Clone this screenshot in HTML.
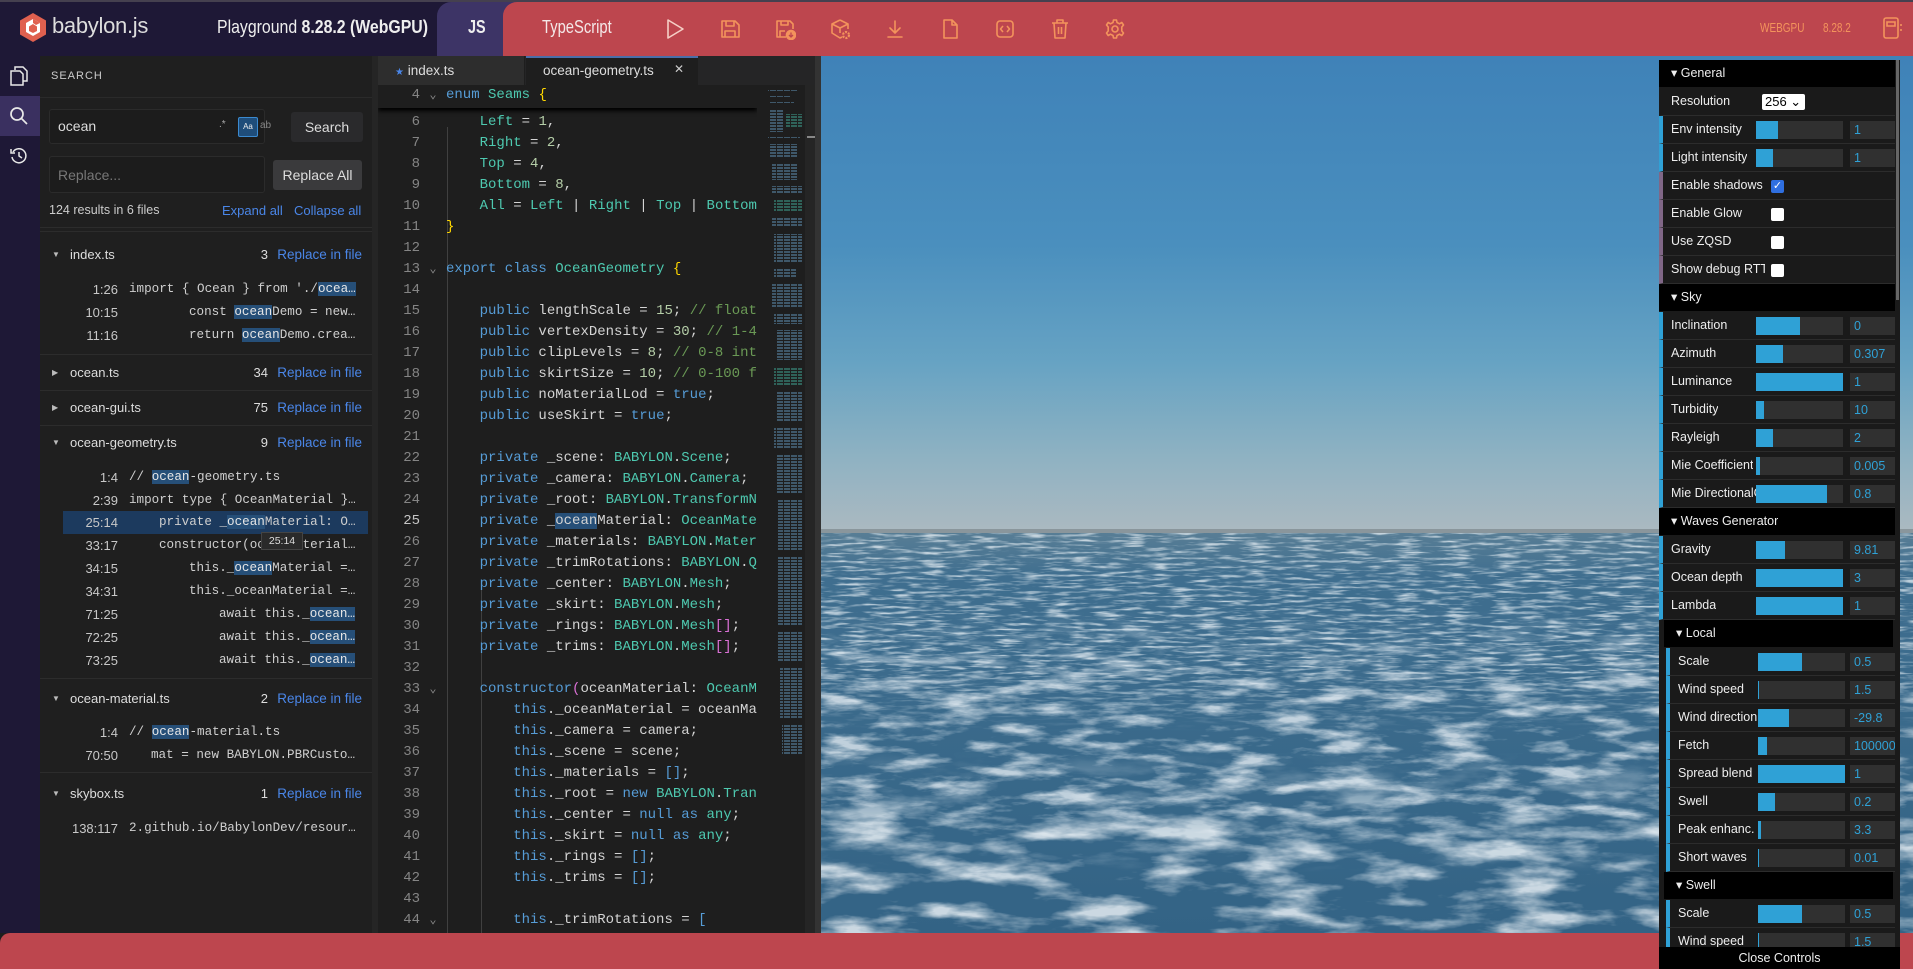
<!DOCTYPE html>
<html><head><meta charset="utf-8"><style>
*{margin:0;padding:0;box-sizing:border-box}
body{width:1913px;height:969px;overflow:hidden;background:#1e1e1e;font-family:"Liberation Sans",sans-serif;position:relative}
.a{position:absolute}
.hdr{left:0;top:0;width:1913px;height:56px;background:#1e1836;border-top:2px solid #45404f}
.ic{position:absolute;top:18px;width:22px;height:22px}
.sr{position:absolute;left:0;width:372px;height:23px;font-size:12.6px;color:#cfcfcf;white-space:pre;line-height:23px}
.sr .ln{position:absolute;right:254px;font-family:"Liberation Sans",sans-serif;font-size:13px;color:#c8c8c8}
.sr .tx{position:absolute;font-family:"Liberation Mono",monospace;overflow:hidden;right:14px}
.h{background:#264f78;color:#e6e6e6}
.fr{position:absolute;left:40px;width:332px;height:30px;font-size:13px;color:#ddd;line-height:30px}
.fr .ar{position:absolute;left:12px;font-size:8px;color:#bbb}
.fr .nm{position:absolute;left:30px}
.fr .ct{position:absolute;right:104px}
.fr .rp{position:absolute;right:10px;color:#4a86e8;font-size:13.5px}
.sep{position:absolute;left:40px;width:332px;height:1px;background:#2c2c2c}
.code{left:378px;top:85px;width:379px;height:848px;overflow:hidden}
.cl{position:absolute;left:0;height:21px;line-height:21px;font-family:"Liberation Mono",monospace;font-size:14px;color:#d4d4d4;white-space:pre;width:379px}
.cl .g{display:inline-block;width:42px;text-align:right;color:#858585}
.cl .f{display:inline-block;width:26px;color:#888;font-size:12px;text-align:center}
.k{color:#569cd6}.t{color:#4ec9b0}.n{color:#b5cea8}.c{color:#6a9955}.y{color:#ffd700}.p{color:#da70d6}
.gui{left:1659px;top:60px;width:241px;height:887px;overflow:hidden;background:#1a1a1a;font-size:12.5px;color:#eee}
.row{position:absolute;left:0;width:236px;height:28px;border-bottom:1px solid #2c2c2c;background:#1a1a1a;line-height:27px}
.row .lb{position:absolute;left:8px;white-space:nowrap;overflow:hidden}
.row.num{border-left:4px solid #2fa1d6}
.row.bool{border-left:4px solid #806787}
.row.hd{background:#000;border-left:none;border-bottom:1px solid #1a1a1a}
.row.hd .lb{left:12px}
.sl{position:absolute;left:93px;top:5px;width:87px;height:18px;background:#303030}
.sl i{position:absolute;left:0;top:0;height:18px;background:#2fa1d6}
.nb{position:absolute;left:187px;top:5px;width:45px;height:18px;background:#303030;color:#2fa1d6;line-height:18px;padding-left:4px;font-size:12.5px;overflow:hidden;white-space:nowrap}
.cb{position:absolute;left:108px;top:8px;width:13px;height:13px;background:#fff;border-radius:2px}
.loc .row{left:7px;width:229px}
</style></head><body>

<div class="a hdr"></div>
<svg class="a" style="left:19px;top:12px" width="28" height="31" viewBox="0 0 28 31"><path d="M14 1 L27 8.5 V22.5 L14 30 L1 22.5 V8.5Z" fill="#e0604f"/><path d="M14 7 L21 11 V20 L14 24 L7 20 V11Z" fill="#fff"/><path d="M14 12 L18 14.5 V19 L14 21 L10 19 V14.5Z" fill="#e0604f"/><path d="M14 7 L21 11 L17 13 L14 11Z" fill="#e0604f"/></svg>
<div class="a" style="left:52px;top:13px;font-size:22px;color:#ddd;letter-spacing:-0.3px">babylon.js</div>
<div class="a" style="left:217px;top:17px;font-size:18px;color:#eee;transform:scaleX(.88);transform-origin:left;white-space:nowrap">Playground <b>8.28.2 (WebGPU)</b></div>
<div class="a" style="left:437px;top:2px;width:80px;height:54px;background:#3d3466;border-radius:14px 0 0 0"></div>
<div class="a" style="left:468px;top:17px;font-size:18px;color:#eee;transform:scaleX(.8);transform-origin:left;font-weight:bold">JS</div>
<div class="a" style="left:503px;top:2px;width:1410px;height:54px;background:#bd464e;border-radius:14px 0 0 0"></div>
<div class="a" style="left:542px;top:17px;font-size:18px;color:#f4e8e8;transform:scaleX(.82);transform-origin:left">TypeScript</div>
<svg class="ic" style="left:664px" viewBox="0 0 22 22" fill="none" stroke="#f6cfc6" stroke-width="1.6" stroke-linejoin="round"><path d="M4 2 L19 11 L4 20Z"/></svg>
<svg class="ic" style="left:719px" viewBox="0 0 22 22" fill="none" stroke="#f3935c" stroke-width="1.6" stroke-linejoin="round"><path d="M3 3 H16 L20 7 V19 H3Z"/><path d="M7 3 V8 H15 V3"/><path d="M6 19 V13 H16 V19"/></svg>
<svg class="ic" style="left:774px" viewBox="0 0 22 22" fill="none" stroke="#f3935c" stroke-width="1.6" stroke-linejoin="round"><path d="M12 19 H3 V3 H16 L19 6 V11"/><path d="M7 3 V7 H14 V3"/><path d="M6 19 V13 H11"/><circle cx="17" cy="17" r="4.5" fill="#f3935c"/><path d="M17 14.5 V19 M15 17 L17 19 L19 17" stroke="#bd464e" stroke-width="1.3"/></svg>
<svg class="ic" style="left:829px" viewBox="0 0 22 22" fill="none" stroke="#f3935c" stroke-width="1.6" stroke-linejoin="round"><path d="M11 2 L19 6 V11 M11 2 L3 6 V15 L11 20 L13 19"/><path d="M3 6 L11 10 L19 6 M11 10 V15"/><circle cx="17" cy="17" r="3" stroke-dasharray="2 1.2" stroke-width="2.2"/></svg>
<svg class="ic" style="left:884px" viewBox="0 0 22 22" fill="none" stroke="#f3935c" stroke-width="1.6" stroke-linecap="round"><path d="M11 3 V15 M6 10 L11 15 L16 10 M4 19 H18"/></svg>
<svg class="ic" style="left:939px" viewBox="0 0 22 22" fill="none" stroke="#f3935c" stroke-width="1.6" stroke-linejoin="round"><path d="M5 2 H13 L18 7 V20 H5Z M13 2 V7 H18"/></svg>
<svg class="ic" style="left:994px" viewBox="0 0 22 22" fill="none" stroke="#f3935c" stroke-width="1.6" stroke-linejoin="round"><rect x="3" y="3" width="16" height="16" rx="3"/><path d="M9 8 L6.5 11 L9 14 M13 8 L15.5 11 L13 14"/></svg>
<svg class="ic" style="left:1049px" viewBox="0 0 22 22" fill="none" stroke="#f3935c" stroke-width="1.6" stroke-linejoin="round"><path d="M3 5 H19 M8 5 V2 H14 V5 M5 5 L6 20 H16 L17 5 M9.5 9 V16 M12.5 9 V16"/></svg>
<svg class="ic" style="left:1104px" viewBox="0 0 22 22" fill="none" stroke="#f3935c" stroke-width="1.6" stroke-linejoin="round"><circle cx="11" cy="11" r="3"/><path d="M9.5 2 H12.5 L13 4.5 L15.5 5.8 L17.8 4.5 L19.5 7 L17.8 9 V13 L19.5 15 L17.8 17.5 L15.5 16.2 L13 17.5 L12.5 20 H9.5 L9 17.5 L6.5 16.2 L4.2 17.5 L2.5 15 L4.2 13 V9 L2.5 7 L4.2 4.5 L6.5 5.8 L9 4.5Z"/></svg>
<div class="a" style="left:1760px;top:21px;font-size:12.5px;color:#f3935c;transform:scaleX(.8);transform-origin:left">WEBGPU</div>
<div class="a" style="left:1823px;top:21px;font-size:12.5px;color:#f3935c;transform:scaleX(.8);transform-origin:left">8.28.2</div>
<svg class="a" style="left:1881px;top:16px" width="22" height="24" viewBox="0 0 22 24" fill="none" stroke="#f3935c" stroke-width="1.6"><rect x="3" y="2" width="14" height="20" rx="2"/><path d="M6 6 H14 V10 H6Z"/><path d="M20 8 V10 M20 13 V15"/></svg>

<div class="a" style="left:0;top:56px;width:40px;height:877px;background:#1e1836"></div>
<div class="a" style="left:0;top:96px;width:40px;height:40px;background:#3a3060"></div>
<svg class="a" style="left:8px;top:65px" width="22" height="22" viewBox="0 0 22 22" fill="none" stroke="#e8e8e8" stroke-width="1.5"><path d="M7 5 V2 H15 L19 6 V16 H15"/><path d="M3 6 H12 L15 9 V20 H3Z"/></svg>
<svg class="a" style="left:8px;top:105px" width="22" height="22" viewBox="0 0 22 22" fill="none" stroke="#e8e8e8" stroke-width="1.7"><circle cx="9" cy="9" r="6"/><path d="M13.5 13.5 L19 19"/></svg>
<svg class="a" style="left:9px;top:146px" width="20" height="20" viewBox="0 0 20 20" fill="none" stroke="#e8e8e8" stroke-width="1.5"><path d="M4 6 A7 7 0 1 1 3 11"/><path d="M2 3 V7 H6"/><path d="M10 6 V10 L13 12"/></svg>

<div class="a" style="left:40px;top:56px;width:332px;height:877px;background:#1f1f1f"></div>
<div class="a" style="left:372px;top:56px;width:6px;height:877px;background:#252525"></div>
<div class="a" style="left:51px;top:70px;font-size:11px;color:#ccc;letter-spacing:1px">SEARCH</div>
<div class="a" style="left:40px;top:97px;width:332px;height:1px;background:#2a2a2a"></div>
<div class="a" style="left:49px;top:109px;width:216px;height:35px;background:#1c1c1c;border:1px solid #2b2b2b;border-radius:3px"></div>
<div class="a" style="left:58px;top:118px;font-size:14px;color:#ddd">ocean</div>
<div class="a" style="left:219px;top:119px;font-size:10px;color:#aaa">.*</div>
<div class="a" style="left:238px;top:117px;width:20px;height:20px;background:#1f4d7a;border:1px solid #3b8ad0;border-radius:2px;font-size:8px;color:#eee;text-align:center;line-height:18px">Aa</div>
<div class="a" style="left:260px;top:120px;font-size:10px;color:#888">ab</div>
<div class="a" style="left:291px;top:112px;width:72px;height:30px;background:#2a2a2c;border-radius:3px;font-size:14px;color:#ddd;text-align:center;line-height:30px">Search</div>
<div class="a" style="left:49px;top:156px;width:216px;height:37px;background:#1c1c1c;border:1px solid #2b2b2b;border-radius:3px"></div>
<div class="a" style="left:58px;top:167px;font-size:14px;color:#777">Replace...</div>
<div class="a" style="left:273px;top:160px;width:89px;height:30px;background:#3a3a3c;border-radius:3px;font-size:14px;color:#ddd;text-align:center;line-height:30px">Replace All</div>
<div class="a" style="left:49px;top:203px;font-size:12.5px;color:#ccc">124 results in 6 files</div>
<div class="a" style="left:222px;top:203px;font-size:13px;color:#4a86e8">Expand all</div>
<div class="a" style="left:294px;top:203px;font-size:13px;color:#4a86e8">Collapse all</div>
<div class="sep" style="top:227px"></div>
<div class="sep" style="top:231px"></div>

<div class="fr" style="top:240px"><span class="ar">▼</span><span class="nm">index.ts</span><span class="ct">3</span><span class="rp">Replace in file</span></div>
<div class="sr" style="top:278px"><span class="ln">1:26</span><span class="tx" style="left:129px">import { Ocean } from './<span class="h">ocea…</span></span></div>
<div class="sr" style="top:301px"><span class="ln">10:15</span><span class="tx" style="left:189px">const <span class="h">ocean</span>Demo = new…</span></div>
<div class="sr" style="top:324px"><span class="ln">11:16</span><span class="tx" style="left:189px">return <span class="h">ocean</span>Demo.crea…</span></div>
<div class="sep" style="top:354px"></div>
<div class="fr" style="top:358px"><span class="ar">▶</span><span class="nm">ocean.ts</span><span class="ct">34</span><span class="rp">Replace in file</span></div>
<div class="sep" style="top:390px"></div>
<div class="fr" style="top:393px"><span class="ar">▶</span><span class="nm">ocean-gui.ts</span><span class="ct">75</span><span class="rp">Replace in file</span></div>
<div class="sep" style="top:425px"></div>
<div class="fr" style="top:428px"><span class="ar">▼</span><span class="nm">ocean-geometry.ts</span><span class="ct">9</span><span class="rp">Replace in file</span></div>
<div class="sr" style="top:466px"><span class="ln">1:4</span><span class="tx" style="left:129px">// <span class="h">ocean</span>-geometry.ts</span></div>
<div class="sr" style="top:489px"><span class="ln">2:39</span><span class="tx" style="left:129px">import type { OceanMaterial }…</span></div>
<div class="a" style="left:63px;top:511px;width:305px;height:23px;background:#1c3a5e"></div>
<div class="sr" style="top:511px"><span class="ln">25:14</span><span class="tx" style="left:159px">private _<span class="h">ocean</span>Material: O…</span></div>
<div class="sr" style="top:534px"><span class="ln">33:17</span><span class="tx" style="left:159px">constructor(oc     terial…</span></div>
<div class="a" style="left:261px;top:532px;width:42px;height:18px;background:#2a2a2a;border:1px solid #444;font-size:10.5px;color:#ddd;text-align:center;line-height:16px">25:14</div>
<div class="sr" style="top:557px"><span class="ln">34:15</span><span class="tx" style="left:189px">this._<span class="h">ocean</span>Material =…</span></div>
<div class="sr" style="top:580px"><span class="ln">34:31</span><span class="tx" style="left:189px">this._oceanMaterial =…</span></div>
<div class="sr" style="top:603px"><span class="ln">71:25</span><span class="tx" style="left:219px">await this._<span class="h">ocean…</span></span></div>
<div class="sr" style="top:626px"><span class="ln">72:25</span><span class="tx" style="left:219px">await this._<span class="h">ocean…</span></span></div>
<div class="sr" style="top:649px"><span class="ln">73:25</span><span class="tx" style="left:219px">await this._<span class="h">ocean…</span></span></div>
<div class="sep" style="top:678px"></div>
<div class="fr" style="top:684px"><span class="ar">▼</span><span class="nm">ocean-material.ts</span><span class="ct">2</span><span class="rp">Replace in file</span></div>
<div class="sr" style="top:721px"><span class="ln">1:4</span><span class="tx" style="left:129px">// <span class="h">ocean</span>-material.ts</span></div>
<div class="sr" style="top:744px"><span class="ln">70:50</span><span class="tx" style="left:151px">mat = new BABYLON.PBRCusto…</span></div>
<div class="sep" style="top:772px"></div>
<div class="fr" style="top:779px"><span class="ar">▼</span><span class="nm">skybox.ts</span><span class="ct">1</span><span class="rp">Replace in file</span></div>
<div class="sr" style="top:817px"><span class="ln">138:117</span><span class="tx" style="left:129px">2.github.io/BabylonDev/resour…</span></div>

<div class="a" style="left:378px;top:56px;width:437px;height:29px;background:#252526"></div>
<div class="a" style="left:378px;top:56px;width:147px;height:29px;background:#2d2d2d;border-right:1px solid #1e1e1e"></div>
<div class="a" style="left:395px;top:63px;font-size:13.5px;color:#ddd"><span style="color:#4a86e8;font-size:10px">★</span> index.ts</div>
<div class="a" style="left:526px;top:56px;width:172px;height:29px;background:#1e1e1e;border-top:2px solid #4a6ea8"></div>
<div class="a" style="left:543px;top:63px;font-size:13.5px;color:#ddd">ocean-geometry.ts</div>
<div class="a" style="left:674px;top:62px;font-size:12px;color:#ccc">✕</div>
<div class="a" style="left:757px;top:85px;width:58px;height:848px;background:#1e1e1e"></div>
<svg class="a" style="left:766px;top:88px" width="40" height="800">
<g fill="#5a88a8" opacity=".55">
<rect x="2" y="2" width="30" height="2"/><rect x="4" y="8" width="20" height="2"/><rect x="4" y="14" width="24" height="2"/><rect x="4" y="22" width="14" height="22"/><rect x="20" y="26" width="16" height="14" fill="#3e9a8a"/><rect x="2" y="48" width="32" height="2"/><rect x="4" y="56" width="28" height="14"/><rect x="6" y="76" width="26" height="16"/><rect x="6" y="98" width="30" height="8"/><rect x="8" y="112" width="28" height="12" fill="#3e9a8a"/><rect x="6" y="130" width="30" height="8"/><rect x="8" y="146" width="28" height="28"/><rect x="8" y="180" width="22" height="10"/><rect x="6" y="196" width="30" height="24"/><rect x="8" y="226" width="28" height="10"/><rect x="10" y="242" width="26" height="30"/><rect x="8" y="280" width="28" height="18" fill="#3e9a8a"/><rect x="10" y="304" width="26" height="30"/><rect x="8" y="340" width="28" height="20"/><rect x="10" y="366" width="26" height="40"/><rect x="12" y="412" width="24" height="50"/><rect x="12" y="468" width="24" height="70"/><rect x="12" y="544" width="24" height="30"/><rect x="14" y="580" width="22" height="50"/><rect x="16" y="636" width="20" height="30"/></g></svg>
<div class="a" style="left:766px;top:88px;width:40px;height:800px;background:repeating-linear-gradient(#1e1e1e 0 1px,transparent 1px 3px),repeating-linear-gradient(90deg,transparent 0 3px,#1e1e1e 3px 4px,transparent 4px 7px)"></div>
<div class="a" style="left:805px;top:85px;width:10px;height:848px;background:#252525"></div>
<div class="a" style="left:807px;top:136px;width:8px;height:2px;background:#888"></div>
<div class="a" style="left:815px;top:56px;width:6px;height:877px;background:#333"></div>

<div class="a code">
<div class="a" style="left:69px;top:42px;width:1px;height:806px;background:#404040"></div>
<div class="a" style="left:103px;top:504px;width:1px;height:344px;background:#404040"></div>
<div class="cl" style="top:27px"><span class="g">6</span><span class="f"></span>    <span class="t">Left</span> = <span class="n">1</span>,</div>
<div class="cl" style="top:48px"><span class="g">7</span><span class="f"></span>    <span class="t">Right</span> = <span class="n">2</span>,</div>
<div class="cl" style="top:69px"><span class="g">8</span><span class="f"></span>    <span class="t">Top</span> = <span class="n">4</span>,</div>
<div class="cl" style="top:90px"><span class="g">9</span><span class="f"></span>    <span class="t">Bottom</span> = <span class="n">8</span>,</div>
<div class="cl" style="top:111px"><span class="g">10</span><span class="f"></span>    <span class="t">All</span> = <span class="t">Left</span> | <span class="t">Right</span> | <span class="t">Top</span> | <span class="t">Bottom</span></div>
<div class="cl" style="top:132px"><span class="g">11</span><span class="f"></span><span class="y">}</span></div>
<div class="cl" style="top:153px"><span class="g">12</span><span class="f"></span></div>
<div class="cl" style="top:174px"><span class="g">13</span><span class="f">⌄</span><span class="k">export class</span> <span class="t">OceanGeometry</span> <span class="y">{</span></div>
<div class="cl" style="top:195px"><span class="g">14</span><span class="f"></span></div>
<div class="cl" style="top:216px"><span class="g">15</span><span class="f"></span>    <span class="k">public</span> lengthScale = <span class="n">15</span>; <span class="c">// float</span></div>
<div class="cl" style="top:237px"><span class="g">16</span><span class="f"></span>    <span class="k">public</span> vertexDensity = <span class="n">30</span>; <span class="c">// 1-4</span></div>
<div class="cl" style="top:258px"><span class="g">17</span><span class="f"></span>    <span class="k">public</span> clipLevels = <span class="n">8</span>; <span class="c">// 0-8 int</span></div>
<div class="cl" style="top:279px"><span class="g">18</span><span class="f"></span>    <span class="k">public</span> skirtSize = <span class="n">10</span>; <span class="c">// 0-100 f</span></div>
<div class="cl" style="top:300px"><span class="g">19</span><span class="f"></span>    <span class="k">public</span> noMaterialLod = <span class="k">true</span>;</div>
<div class="cl" style="top:321px"><span class="g">20</span><span class="f"></span>    <span class="k">public</span> useSkirt = <span class="k">true</span>;</div>
<div class="cl" style="top:342px"><span class="g">21</span><span class="f"></span></div>
<div class="cl" style="top:363px"><span class="g">22</span><span class="f"></span>    <span class="k">private</span> _scene: <span class="t">BABYLON</span>.<span class="t">Scene</span>;</div>
<div class="cl" style="top:384px"><span class="g">23</span><span class="f"></span>    <span class="k">private</span> _camera: <span class="t">BABYLON</span>.<span class="t">Camera</span>;</div>
<div class="cl" style="top:405px"><span class="g">24</span><span class="f"></span>    <span class="k">private</span> _root: <span class="t">BABYLON</span>.<span class="t">TransformNode</span></div>
<div class="cl" style="top:426px"><span class="g" style="color:#c6c6c6">25</span><span class="f"></span>    <span class="k">private</span> _<span style="background:#264f78">ocean</span>Material: <span class="t">OceanMaterial</span></div>
<div class="cl" style="top:447px"><span class="g">26</span><span class="f"></span>    <span class="k">private</span> _materials: <span class="t">BABYLON</span>.<span class="t">Material</span></div>
<div class="cl" style="top:468px"><span class="g">27</span><span class="f"></span>    <span class="k">private</span> _trimRotations: <span class="t">BABYLON</span>.<span class="t">Q</span></div>
<div class="cl" style="top:489px"><span class="g">28</span><span class="f"></span>    <span class="k">private</span> _center: <span class="t">BABYLON</span>.<span class="t">Mesh</span>;</div>
<div class="cl" style="top:510px"><span class="g">29</span><span class="f"></span>    <span class="k">private</span> _skirt: <span class="t">BABYLON</span>.<span class="t">Mesh</span>;</div>
<div class="cl" style="top:531px"><span class="g">30</span><span class="f"></span>    <span class="k">private</span> _rings: <span class="t">BABYLON</span>.<span class="t">Mesh</span><span class="p">[]</span>;</div>
<div class="cl" style="top:552px"><span class="g">31</span><span class="f"></span>    <span class="k">private</span> _trims: <span class="t">BABYLON</span>.<span class="t">Mesh</span><span class="p">[]</span>;</div>
<div class="cl" style="top:573px"><span class="g">32</span><span class="f"></span></div>
<div class="cl" style="top:594px"><span class="g">33</span><span class="f">⌄</span>    <span class="k">constructor</span><span class="p">(</span>oceanMaterial: <span class="t">OceanMaterial</span></div>
<div class="cl" style="top:615px"><span class="g">34</span><span class="f"></span>        <span class="k">this</span>._oceanMaterial = oceanMaterial</div>
<div class="cl" style="top:636px"><span class="g">35</span><span class="f"></span>        <span class="k">this</span>._camera = camera;</div>
<div class="cl" style="top:657px"><span class="g">36</span><span class="f"></span>        <span class="k">this</span>._scene = scene;</div>
<div class="cl" style="top:678px"><span class="g">37</span><span class="f"></span>        <span class="k">this</span>._materials = <span class="k">[]</span>;</div>
<div class="cl" style="top:699px"><span class="g">38</span><span class="f"></span>        <span class="k">this</span>._root = <span class="k">new</span> <span class="t">BABYLON</span>.<span class="t">TransformNode</span></div>
<div class="cl" style="top:720px"><span class="g">39</span><span class="f"></span>        <span class="k">this</span>._center = <span class="k">null as</span> <span class="t">any</span>;</div>
<div class="cl" style="top:741px"><span class="g">40</span><span class="f"></span>        <span class="k">this</span>._skirt = <span class="k">null as</span> <span class="t">any</span>;</div>
<div class="cl" style="top:762px"><span class="g">41</span><span class="f"></span>        <span class="k">this</span>._rings = <span class="k">[]</span>;</div>
<div class="cl" style="top:783px"><span class="g">42</span><span class="f"></span>        <span class="k">this</span>._trims = <span class="k">[]</span>;</div>
<div class="cl" style="top:804px"><span class="g">43</span><span class="f"></span></div>
<div class="cl" style="top:825px"><span class="g">44</span><span class="f">⌄</span>        <span class="k">this</span>._trimRotations = <span class="k">[</span></div>
<div class="cl" style="top:0;height:23px;background:#1e1e1e;box-shadow:0 3px 4px #000"><span class="g">4</span><span class="f">⌄</span><span class="k">enum</span> <span class="t">Seams</span> <span class="y">{</span></div>
</div>

<div class="a" style="left:821px;top:56px;width:1092px;height:473px;background:linear-gradient(#3f82b8 0%,#4a8fbe 40%,#67a3c3 65%,#8fb2c2 85%,#aab9c1 100%)"></div>
<svg class="a" style="left:821px;top:529px" width="1092" height="404">
<defs>
<filter id="w0" x="0" y="0" width="100%" height="100%"><feTurbulence type="fractalNoise" baseFrequency="0.04 0.35" numOctaves="3" seed="2"/><feColorMatrix type="matrix" values="0 0 0 0 0.82  0 0 0 0 0.88  0 0 0 0 0.92  0 0 0 3 -1.4"/></filter>
<filter id="w1" x="0" y="0" width="100%" height="100%"><feTurbulence type="fractalNoise" baseFrequency="0.018 0.08" numOctaves="5" seed="3"/><feColorMatrix type="matrix" values="0 0 0 0 0.85  0 0 0 0 0.9  0 0 0 0 0.94  0 0 0 3.2 -1.5"/></filter>
<filter id="w2" x="0" y="0" width="100%" height="100%"><feTurbulence type="fractalNoise" baseFrequency="0.012 0.045" numOctaves="5" seed="9"/><feColorMatrix type="matrix" values="0 0 0 0 0.88  0 0 0 0 0.92  0 0 0 0 0.95  0 0 0 3.4 -1.6"/></filter>
<linearGradient id="og" x1="0" y1="0" x2="0" y2="1"><stop offset="0" stop-color="#5a7f96"/><stop offset=".12" stop-color="#3f6e8f"/><stop offset="1" stop-color="#336385"/></linearGradient>
<linearGradient id="m1" x1="0" y1="0" x2="0" y2="1"><stop offset="0" stop-color="#fff"/><stop offset=".35" stop-color="#fff"/><stop offset=".5" stop-color="#000"/></linearGradient>
<linearGradient id="m2" x1="0" y1="0" x2="0" y2="1"><stop offset=".2" stop-color="#000"/><stop offset=".4" stop-color="#fff"/><stop offset=".7" stop-color="#fff"/><stop offset=".85" stop-color="#000"/></linearGradient>
<linearGradient id="m3" x1="0" y1="0" x2="0" y2="1"><stop offset=".55" stop-color="#000"/><stop offset=".75" stop-color="#fff"/></linearGradient>
<mask id="k1"><rect width="1092" height="404" fill="url(#m1)"/></mask>
<mask id="k2"><rect width="1092" height="404" fill="url(#m2)"/></mask>
<mask id="k3"><rect width="1092" height="404" fill="url(#m3)"/></mask>
</defs>
<rect width="1092" height="404" fill="url(#og)"/>
<rect y="4" width="1092" height="400" filter="url(#w0)" mask="url(#k1)" opacity=".75"/>
<rect width="1092" height="404" filter="url(#w1)" mask="url(#k2)" opacity=".75"/>
<rect width="1092" height="404" filter="url(#w2)" mask="url(#k3)" opacity=".8"/>
<rect width="1092" height="4" fill="#8a969c"/>
</svg>

<div class="a" style="left:0;top:933px;width:1913px;height:36px;background:#bd464e;border-radius:10px 0 0 0"></div>

<div class="a gui">
<div class="row hd" style="top:0"><span class="lb">▾ General</span></div>
<div class="row" style="top:28px;border-left:4px solid #1a1a1a"><span class="lb">Resolution</span><div class="a" style="left:99px;top:6px;width:43px;height:16px;background:#fff;color:#000;font-size:13px;line-height:16px;padding-left:3px;border-radius:2px">256 ⌄</div></div>
<div class="row num" style="top:56px"><span class="lb">Env intensity</span><div class="sl"><i style="width:22px"></i></div><div class="nb">1</div></div>
<div class="row num" style="top:84px"><span class="lb">Light intensity</span><div class="sl"><i style="width:17px"></i></div><div class="nb">1</div></div>
<div class="row bool" style="top:112px"><span class="lb">Enable shadows</span><div class="cb" style="background:#2f6fe0;color:#fff;font-size:11px;line-height:13px;text-align:center">✓</div></div>
<div class="row bool" style="top:140px"><span class="lb">Enable Glow</span><div class="cb"></div></div>
<div class="row bool" style="top:168px"><span class="lb">Use ZQSD</span><div class="cb"></div></div>
<div class="row bool" style="top:196px"><span class="lb" style="width:94px">Show debug RTT</span><div class="cb"></div></div>
<div class="row hd" style="top:224px"><span class="lb">▾ Sky</span></div>
<div class="row num" style="top:252px"><span class="lb">Inclination</span><div class="sl"><i style="width:44px"></i></div><div class="nb">0</div></div>
<div class="row num" style="top:280px"><span class="lb">Azimuth</span><div class="sl"><i style="width:27px"></i></div><div class="nb">0.307</div></div>
<div class="row num" style="top:308px"><span class="lb">Luminance</span><div class="sl"><i style="width:87px"></i></div><div class="nb">1</div></div>
<div class="row num" style="top:336px"><span class="lb">Turbidity</span><div class="sl"><i style="width:8px"></i></div><div class="nb">10</div></div>
<div class="row num" style="top:364px"><span class="lb">Rayleigh</span><div class="sl"><i style="width:17px"></i></div><div class="nb">2</div></div>
<div class="row num" style="top:392px"><span class="lb">Mie Coefficient</span><div class="sl"><i style="width:4px"></i></div><div class="nb">0.005</div></div>
<div class="row num" style="top:420px"><span class="lb" style="width:85px">Mie DirectionalG</span><div class="sl"><i style="width:71px"></i></div><div class="nb">0.8</div></div>
<div class="row hd" style="top:448px"><span class="lb">▾ Waves Generator</span></div>
<div class="row num" style="top:476px"><span class="lb">Gravity</span><div class="sl"><i style="width:29px"></i></div><div class="nb">9.81</div></div>
<div class="row num" style="top:504px"><span class="lb">Ocean depth</span><div class="sl"><i style="width:87px"></i></div><div class="nb">3</div></div>
<div class="row num" style="top:532px"><span class="lb">Lambda</span><div class="sl"><i style="width:87px"></i></div><div class="nb">1</div></div>
<div class="loc">
<div class="row hd" style="top:560px;left:5px"><span class="lb">▾ Local</span></div>
<div class="row num" style="top:588px"><span class="lb">Scale</span><div class="sl" style="left:88px"><i style="width:44px"></i></div><div class="nb" style="left:180px">0.5</div></div>
<div class="row num" style="top:616px"><span class="lb">Wind speed</span><div class="sl" style="left:88px"><i style="width:1px"></i></div><div class="nb" style="left:180px">1.5</div></div>
<div class="row num" style="top:644px"><span class="lb" style="width:80px">Wind direction</span><div class="sl" style="left:88px"><i style="width:31px"></i></div><div class="nb" style="left:180px">-29.8</div></div>
<div class="row num" style="top:672px"><span class="lb">Fetch</span><div class="sl" style="left:88px"><i style="width:9px"></i></div><div class="nb" style="left:180px">100000</div></div>
<div class="row num" style="top:700px"><span class="lb">Spread blend</span><div class="sl" style="left:88px"><i style="width:87px"></i></div><div class="nb" style="left:180px">1</div></div>
<div class="row num" style="top:728px"><span class="lb">Swell</span><div class="sl" style="left:88px"><i style="width:17px"></i></div><div class="nb" style="left:180px">0.2</div></div>
<div class="row num" style="top:756px"><span class="lb">Peak enhanc.</span><div class="sl" style="left:88px"><i style="width:3px"></i></div><div class="nb" style="left:180px">3.3</div></div>
<div class="row num" style="top:784px"><span class="lb">Short waves</span><div class="sl" style="left:88px"><i style="width:1px"></i></div><div class="nb" style="left:180px">0.01</div></div>
<div class="row hd" style="top:812px;left:5px"><span class="lb">▾ Swell</span></div>
<div class="row num" style="top:840px"><span class="lb">Scale</span><div class="sl" style="left:88px"><i style="width:44px"></i></div><div class="nb" style="left:180px">0.5</div></div>
<div class="row num" style="top:868px"><span class="lb">Wind speed</span><div class="sl" style="left:88px"><i style="width:1px"></i></div><div class="nb" style="left:180px">1.5</div></div>
</div>
<div class="a" style="left:236px;top:0;width:5px;height:887px;background:#1a1a1a"></div>
<div class="a" style="left:237px;top:0;width:3px;height:240px;background:#666"></div>
</div>
<div class="a" style="left:1659px;top:947px;width:241px;height:22px;background:#000;color:#eee;font-size:12.5px;text-align:center;line-height:22px">Close Controls</div>
</body></html>
